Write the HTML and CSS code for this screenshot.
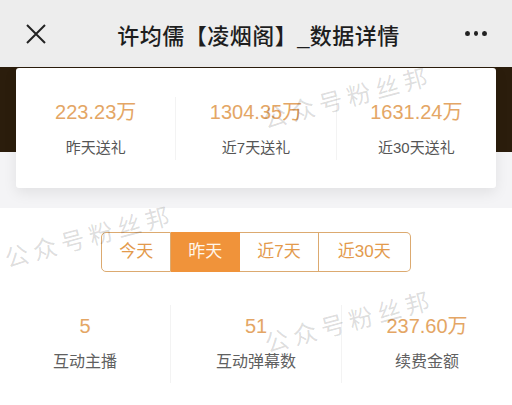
FILE: index.html
```html
<!DOCTYPE html>
<html lang="zh-CN">
<head>
  <meta charset="UTF-8" />
  <title>许均儒【凌烟阁】_数据详情</title>
  <meta name="viewport" content="width=device-width, initial-scale=1.0" />
  <link rel="stylesheet" href="styles.css">
</head>
<body>
  <div class="topbar">
    <svg class="close" width="20" height="20" viewBox="0 0 20 20">
      <path d="M1 1 L19 19 M19 1 L1 19" stroke="#222" stroke-width="2" fill="none" />
    </svg>
    <div class="title">许均儒【凌烟阁】_数据详情</div>
    <div class="more"><span></span><span></span><span></span></div>
  </div>

  <div class="hero">
    <div class="card">
      <div class="stat">
        <div class="value">223.23万</div>
        <div class="label">昨天送礼</div>
      </div>
      <div class="stat">
        <div class="value">1304.35万</div>
        <div class="label">近7天送礼</div>
      </div>
      <div class="stat">
        <div class="value">1631.24万</div>
        <div class="label">近30天送礼</div>
      </div>
    </div>
  </div>

  <div class="panel">
    <div class="tabs">
      <div class="tab">今天</div>
      <div class="tab active">昨天</div>
      <div class="tab">近7天</div>
      <div class="tab">近30天</div>
    </div>

    <div class="stats">
      <div class="stat">
        <div class="value">5</div>
        <div class="label">互动主播</div>
      </div>
      <div class="stat">
        <div class="value">51</div>
        <div class="label">互动弹幕数</div>
      </div>
      <div class="stat">
        <div class="value">237.60万</div>
        <div class="label">续费金额</div>
      </div>
    </div>
  </div>

  <!-- watermark -->
  <div class="mark mark-1">公众号粉丝邦</div>
  <div class="mark mark-2">公众号粉丝邦</div>
  <div class="mark mark-3">公众号粉丝邦</div>
</body>
</html>
```

FILE: styles.css
```css
* {
  box-sizing: border-box;
}

body {
  margin: 0;
  padding: 0;
  font-family: "Liberation Sans", "Noto Sans CJK SC", sans-serif;
  background: #ffffff;
  color: #333;
  width: 512px;
  height: 405px;
  overflow: hidden;
  position: relative;
}

.topbar {
  height: 67px;
  background: #ededed;
  display: flex;
  align-items: center;
  padding: 0 20px 0 26px;
}

.close {
  display: block;
  width: 20px;
  height: 20px;
  margin-top: 1px;
}

.title {
  flex: 1;
  text-align: center;
  font-size: 22px;
  letter-spacing: 0.5px;
  color: #1e1e1e;
  font-weight: 500;
  padding-left: 6px;
}

.more {
  display: flex;
  gap: 4px;
  width: 22px;
  margin-right: 5px;
}

.more span {
  width: 5px;
  height: 5px;
  border-radius: 50%;
  background: #222;
}

.hero {
  background: linear-gradient(#2b1d0c 0, #2b1d0c 85px, #f4f4f6 85px);
  padding: 1px 16px 20px;
}

.card {
  height: 120px;
  background: #fff;
  border-radius: 3px;
  box-shadow: 0 5px 14px rgba(0, 0, 0, 0.08);
  display: flex;
  align-items: flex-start;
  padding-top: 29px;
}

.stat {
  flex: 1;
  text-align: center;
  height: 63px;
  border-left: 1px solid #f3f3f3;
}

.stat:first-child {
  border-left: none;
}

.value {
  font-size: 20px;
  line-height: 30px;
  color: #e4a665;
}

.label {
  font-size: 15px;
  line-height: 24px;
  margin-top: 9px;
  color: #555;
}

.panel {
  background: #fff;
  padding-top: 24px;
}

.tabs {
  display: flex;
  justify-content: center;
}

.tab {
  height: 40px;
  line-height: 38px;
  padding: 0 17px;
  font-size: 17px;
  color: #e39a4c;
  border: 1px solid #dcaa70;
  border-left: none;
}

.tab:first-child {
  border-left: 1px solid #dcaa70;
  border-radius: 5px 0 0 5px;
}

.tab:last-child {
  border-radius: 0 5px 5px 0;
  padding: 0 19px 0 19px;
}

.tab.active {
  background: #f0933a;
  border-color: #f0933a;
  color: #fff6ea;
}

.stats {
  display: flex;
  margin-top: 33px;
}

.stats .stat {
  height: 78px;
  padding-top: 6px;
}

.stats .label {
  font-size: 16px;
  color: #606060;
}

.mark {
  position: absolute;
  font-family: "Noto Sans CJK SC", sans-serif;
  font-size: 24px;
  line-height: 24px;
  letter-spacing: 5px;
  color: rgba(0, 0, 0, 0.14);
  transform-origin: left center;
  transform: rotate(-15deg);
  white-space: nowrap;
  pointer-events: none;
}

.mark-1 {
  left: 263px;
  top: 107px;
}

.mark-2 {
  left: 5px;
  top: 246px;
}

.mark-3 {
  left: 265px;
  top: 331px;
}
```
